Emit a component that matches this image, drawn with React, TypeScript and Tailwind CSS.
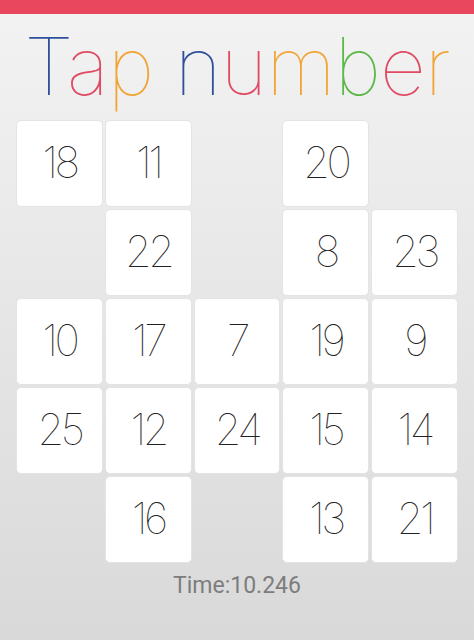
const cells: (number | null)[] = [
  18, 11, null, 20, null,
  null, 22, null, 8, 23,
  10, 17, 7, 19, 9,
  25, 12, 24, 15, 14,
  null, 16, null, 13, 21,
];

const title: [string, string][] = [
  ["T", "text-[#2d4f9c]"],
  ["a", "text-[#e04a62]"],
  ["p", "text-[#f0a536]"],
  [" ", ""],
  ["n", "text-[#2d4f9c]"],
  ["u", "text-[#e04a62]"],
  ["m", "text-[#f0a536]"],
  ["b", "text-[#5db84a]"],
  ["e", "text-[#e04a62]"],
  ["r", "text-[#f0a536]"],
];

export default function App() {
  return (
    <div className="flex h-[640px] w-[474px] flex-col bg-gradient-to-b from-[#f3f3f3] to-[#d9d9d9] antialiased">
      <div className="h-[14px] bg-[#e8475e]" />

      <h1 className="mt-[5px] h-[101px] whitespace-pre text-center font-['Inter',sans-serif] text-[80px] [font-weight:120] leading-[94px] tracking-[-1px]">
        {title.map(([ch, c], i) => (
          <span key={i} className={c}>
            {ch}
          </span>
        ))}
      </h1>

      <div className="mx-[16px] grid grid-cols-5 gap-[2px]">
        {cells.map((n, i) =>
          n === null ? (
            <div key={i} className="h-[87px]" />
          ) : (
            <div
              key={i}
              className="flex h-[87px] items-center justify-center rounded-[5px] border border-[#e4e4e4] bg-white pb-[3px] font-['Inter',sans-serif] text-[43px] [font-weight:135] tracking-[-3.5px] text-[#222] antialiased"
            >
              {n}
            </div>
          )
        )}
      </div>

      <p className="mt-[6px] text-center font-['Roboto',sans-serif] text-[23px] text-[#7d7d7d]">
        Time:10.246
      </p>
    </div>
  );
}
